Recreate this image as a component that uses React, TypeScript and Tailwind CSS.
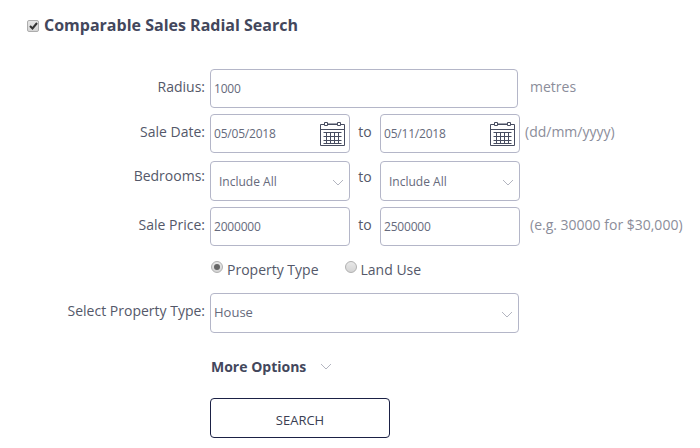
import React from "react";

const box = "rounded-[4px] border border-[#b4b6c8] bg-white flex items-center text-[#666a7c] shrink-0";

function Chevron({ className = "" }: { className?: string }) {
  return (
    <svg width="12" height="7" viewBox="0 0 12 7" fill="none" className={className}>
      <path d="M1 1l5 5 5-5" stroke="#b3b5c0" strokeWidth="1" />
    </svg>
  );
}

function Calendar() {
  return (
    <svg width="25" height="25" viewBox="0 0 25 25" fill="none" stroke="#474c60" strokeWidth="1" className="shrink-0">
      <path d="M.5 3.5h24v21H.5zM.5 8.5h24" />
      <path d="M4.5 1.5h3v3h-3zM17.5 1.5h3v3h-3z" fill="#fff" />
      <path d="M7.5 3h10" />
      <path d="M3.5 11.5h18M3.5 15.5h18M3.5 19.5h18M3.5 22.5h18M6.5 11v12M10.5 11v12M14.5 11v12M18.5 11v12" />
    </svg>
  );
}

function Label({ children, up = "-translate-y-[2px]" }: { children: React.ReactNode; up?: string }) {
  return <div className={`w-[205px] shrink-0 text-right text-[14px] leading-[20px] text-[#545869] ${up}`}>{children}</div>;
}

function To({ up = "-translate-y-[2px]" }: { up?: string }) {
  return <div className={`w-[30px] shrink-0 text-center text-[14px] text-[#545869] ${up}`}>to</div>;
}

function Field({ value, icon, width = "w-[140px]" }: { value: string; icon?: boolean; width?: string }) {
  return (
    <div className={`${box} ${width} h-[39px] pl-[3px] pr-[4px] justify-between text-[12px]`}>
      <span className="pt-[1px] tracking-[-0.2px]">{value}</span>
      {icon && <Calendar />}
    </div>
  );
}

function Select({ value, width = "w-[140px]", pad = "pl-[8px]", text = "text-[12px]", drop = "" }: { value: string; width?: string; pad?: string; text?: string; drop?: string }) {
  return (
    <div className={`${box} ${width} ${pad} ${text} pr-[5px] justify-between h-[40px]`}>
      <span className={drop}>{value}</span>
      <Chevron className="mt-[2px]" />
    </div>
  );
}

function Radio({ checked, className = "" }: { checked?: boolean; className?: string }) {
  return (
    <span className={`w-[12px] h-[12px] rounded-full border border-[#b0b0b0] bg-gradient-to-b from-[#e8e8e8] to-[#d4d4d4] flex items-center justify-center shrink-0 -translate-y-[2px] ${className}`}>
      {checked && <span className="w-[6px] h-[6px] rounded-full bg-[#666666]" />}
    </span>
  );
}

export default function App() {
  return (
    <div className="w-[700px] h-[448px] overflow-hidden bg-white font-['Open_Sans',sans-serif]">
      <div className="flex items-center pl-[27px] pt-[14px] h-[37px]">
        <span className="w-[12px] h-[12px] mr-[5px] rounded-[2px] border border-[#adadad] bg-gradient-to-b from-[#e6e6e6] to-[#d6d6d6] flex items-center justify-center shrink-0">
          <svg width="9" height="8" viewBox="0 0 9 8" fill="none">
            <path d="M1 4l2.5 2.5L8 1" stroke="#333333" strokeWidth="2" />
          </svg>
        </span>
        <span className="text-[16px] font-bold text-[#43475c] leading-[22px] -translate-y-[1px]">Comparable Sales Radial Search</span>
      </div>

      <div className="flex flex-col pt-[32px]">
        <div className="flex items-center">
          <Label>Radius:</Label>
          <Field value="1000" width="ml-[5px] w-[308px]" />
          <span className="ml-[12px] text-[14px] text-[#8b8d9a] -translate-y-[2px]">metres</span>
        </div>
        <div className="flex items-center mt-[6px]">
          <Label>Sale Date:</Label>
          <Field value="05/05/2018" icon width="ml-[5px] w-[140px]" />
          <To />
          <Field value="05/11/2018" icon />
          <span className="ml-[5px] text-[14px] text-[#8b8d9a] -translate-y-[2px]">(dd/mm/yyyy)</span>
        </div>
        <div className="flex items-center mt-[8px]">
          <Label up="-translate-y-[5px]">Bedrooms:</Label>
          <Select value="Include All" width="ml-[5px] w-[140px]" drop="pt-[2px]" />
          <To up="-translate-y-[5px]" />
          <Select value="Include All" drop="pt-[2px]" />
        </div>
        <div className="flex items-center mt-[6px]">
          <Label>Sale Price:</Label>
          <Field value="2000000" width="ml-[5px] w-[140px]" />
          <To />
          <Field value="2500000" />
          <span className="ml-[10px] text-[14px] text-[#8b8d9a] -translate-y-[2px]">(e.g. 30000 for $30,000)</span>
        </div>

        <div className="flex items-center ml-[211px] mt-[13px] h-[20px] text-[14px] text-[#545869]">
          <Radio checked className="mr-[4px]" />
          <span>Property Type</span>
          <Radio className="ml-[26px] mr-[4px]" />
          <span>Land Use</span>
        </div>

        <div className="flex items-center mt-[14px]">
          <Label>Select Property Type:</Label>
          <Select value="House" width="ml-[5px] w-[309px]" pad="pl-[3px]" text="text-[13px]" />
        </div>

        <div className="flex items-center ml-[211px] mt-[23px] h-[20px]">
          <span className="text-[14px] font-bold text-[#43475c]">More Options</span>
          <Chevron className="ml-[14px]" />
        </div>

        <button className="ml-[210px] mt-[22px] w-[180px] h-[40px] pt-[6px] rounded-[4px] border border-[#1b2145] bg-white text-[13px] text-[#3a3e52] flex items-center justify-center">
          SEARCH
        </button>
      </div>
    </div>
  );
}
